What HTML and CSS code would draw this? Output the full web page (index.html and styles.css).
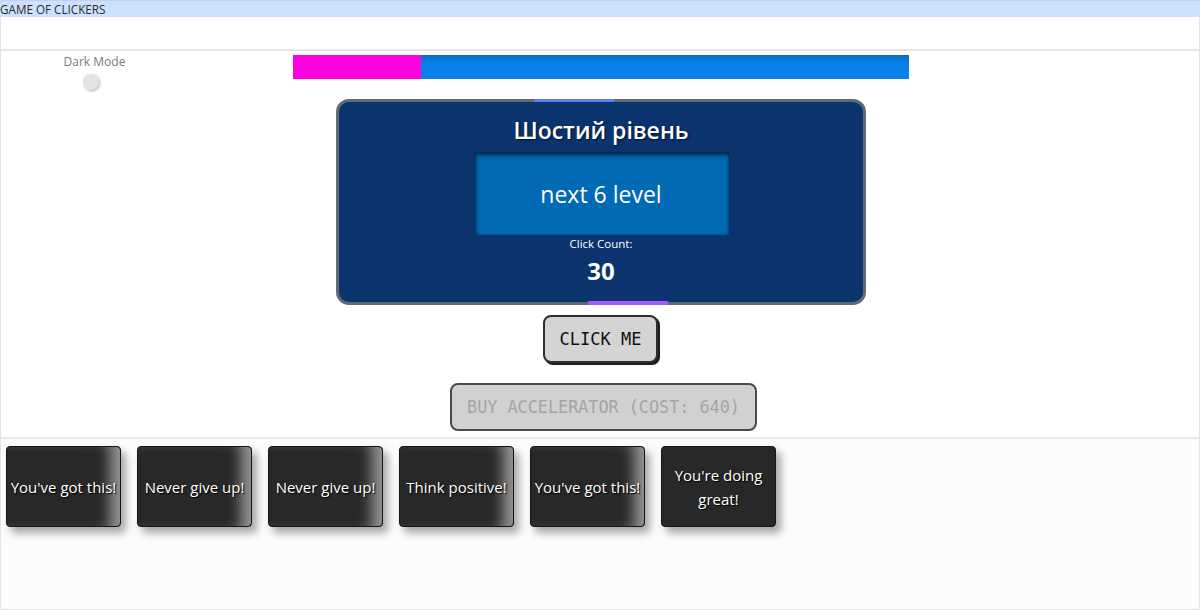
FILE: index.html
```html
<!DOCTYPE html>
<html lang="uk">
<head>
<meta charset="utf-8">
<title>Game of Clickers</title>
<link rel="stylesheet" href="styles.css">
</head>
<body>
<div class="titlebar">GAME OF CLICKERS</div>
<div class="page">
  <div class="topspace"></div>
  <main class="game">
    <div class="top-row">
      <div class="mode">
        <span class="mode-label">Dark Mode</span>
        <span class="knob"></span>
      </div>
      <div class="progress"><div class="progress-fill" style="width:20.8%"></div></div>
    </div>
    <section class="level">
      <h1 class="level-title">Шостий рівень</h1>
      <div class="level-next">next 6 level</div>
      <div class="count-label">Click Count:</div>
      <div class="count">30</div>
    </section>
    <button class="btn btn-click">CLICK ME</button>
    <button class="btn btn-buy" disabled>BUY ACCELERATOR (COST: 640)</button>
  </main>
  <section class="cards">
    <div class="card card-glow">You've got this!</div>
    <div class="card card-glow">Never give up!</div>
    <div class="card card-glow">Never give up!</div>
    <div class="card card-glow">Think positive!</div>
    <div class="card card-glow">You've got this!</div>
    <div class="card">You're doing great!</div>
  </section>
</div>
</body>
</html>
```
FILE: styles.css
```css
html, body {
  margin: 0;
  padding: 0;
}
body {
  width: 1200px;
  height: 610px;
  overflow: hidden;
  background: #ffffff;
  font-family: "Open Sans", "Noto Sans", sans-serif;
}
.titlebar {
  height: 17px;
  line-height: 17px;
  background: #cde1fd;
  border-top: 1px solid #bcd3f3;
  box-sizing: border-box;
  font-size: 11.7px;
  color: #2b2b2b;
  white-space: nowrap;
}
.page {
  height: 593px;
  box-sizing: border-box;
  border: 1px solid #e4e4e4;
  border-top: none;
  display: flex;
  flex-direction: column;
}
.topspace {
  height: 32px;
  border-bottom: 2px solid #e6e6e6;
  flex: none;
}
.game {
  flex: none;
  padding-bottom: 6px;
  border-bottom: 2px solid #e8e8e8;
}
.top-row {
  display: flex;
  align-items: flex-start;
  padding-top: 3px;
}
.mode {
  width: 187px;
  display: flex;
  flex-direction: column;
  align-items: center;
}
.mode-label {
  font-size: 12px;
  line-height: 16px;
  color: #7b7b7b;
}
.knob {
  width: 16px;
  height: 16px;
  margin-top: 4px;
  margin-right: 7px;
  border-radius: 50%;
  background: #e4e4e4;
  box-shadow: 1px 1px 3px rgba(0, 0, 0, 0.3);
}
.progress {
  width: 616px;
  height: 24px;
  margin-left: 105px;
  margin-top: 1px;
  background: linear-gradient(#0a6bc8, #0882ea 40%, #0983ea);
  display: flex;
}
.progress-fill {
  height: 100%;
  background: #ff00e1;
}
.level {
  position: relative;
  box-sizing: border-box;
  width: 530px;
  height: 206px;
  margin: 9px 0 0 calc(50% - 264px);
  border: 3px solid #5e6a78;
  border-radius: 13px;
  background: #0b346f;
  padding-top: 12px;
  display: flex;
  flex-direction: column;
  align-items: center;
  color: #ffffff;
}
.level::before,
.level::after {
  content: "";
  position: absolute;
  width: 80px;
}
.level::before {
  top: -3px;
  left: 195px;
  height: 3px;
  background: #5a80ef;
}
.level::after {
  bottom: -3px;
  left: 249px;
  height: 4px;
  background: #a45af6;
}
.level-title {
  margin: 0;
  font-size: 23px;
  line-height: 32px;
  font-weight: 600;
  text-shadow: 1px 1px 2px rgba(0, 0, 0, 0.7);
}
.level-next {
  margin-top: 6px;
  width: 255px;
  height: 83px;
  display: flex;
  align-items: center;
  justify-content: center;
  background: #006ab5;
  box-shadow: inset 2px 3px 4px rgba(0, 0, 0, 0.6), inset -1px 0 3px rgba(0, 0, 0, 0.3);
  font-size: 23px;
}
.count-label {
  margin-top: 1px;
  font-size: 11.5px;
  line-height: 16px;
}
.count {
  margin-top: 5px;
  font-size: 24px;
  line-height: 28px;
  font-weight: 700;
}
.btn {
  display: block;
  box-sizing: border-box;
  font-family: "DejaVu Sans Mono", "Liberation Mono", monospace;
  border-radius: 8px;
  padding: 0;
}
.btn-click {
  width: 115px;
  height: 48px;
  margin: 10px 0 0 calc(50% - 57px);
  border: 2px solid #2d2d2d;
  background: #d4d4d4;
  color: #111111;
  font-size: 17px;
  box-shadow: 2px 2px 0 #1c1c1c;
}
.btn-buy {
  width: 307px;
  height: 48px;
  margin: 20px 0 0 calc(50% - 150px);
  border: 2px solid #4a4a4a;
  background: #d1d1d1;
  color: #a4a4a4;
  font-size: 16.8px;
}
.cards {
  flex: 1;
  display: flex;
  align-items: flex-start;
  gap: 16px;
  padding: 7px 0 0 5px;
  background: #fcfcfc;
}
.card {
  box-sizing: border-box;
  width: 115px;
  height: 81px;
  padding: 0 3px;
  display: flex;
  align-items: center;
  justify-content: center;
  text-align: center;
  background: #282828;
  border: 1px solid #151515;
  border-radius: 4px;
  color: #ffffff;
  font-size: 15px;
  line-height: 24px;
  text-shadow: 1px 1px 1px #000000;
  box-shadow: 5px 6px 8px rgba(0, 0, 0, 0.35);
}
.card-glow {
  box-shadow: inset -18px 0 14px -8px rgba(255, 255, 255, 0.5), 5px 6px 8px rgba(0, 0, 0, 0.35);
}
```
